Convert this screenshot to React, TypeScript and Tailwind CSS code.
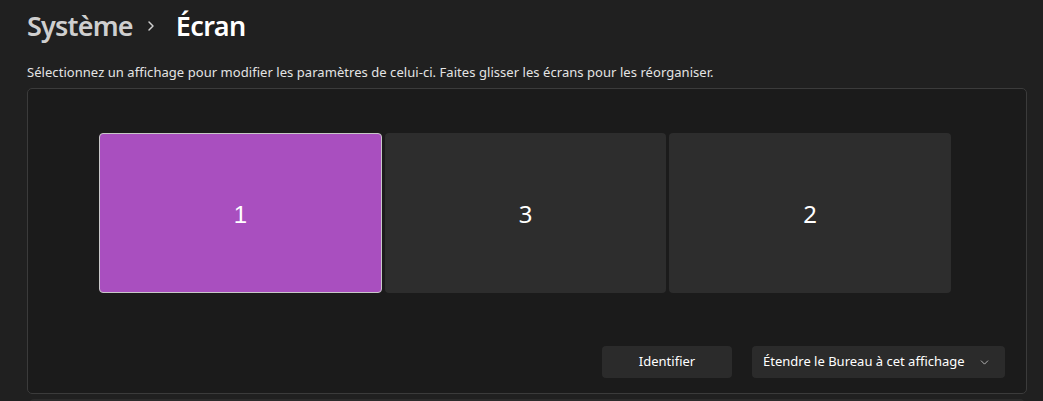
import { ChevronRight, ChevronDown } from "lucide-react";

const displays = [
  { id: "1", selected: true, w: "w-[283px]" },
  { id: "3", selected: false, w: "w-[281px]" },
  { id: "2", selected: false, w: "w-[282px]" },
];

export default function App() {
  return (
    <div className="w-[1043px] h-[401px] overflow-hidden bg-[#202020] font-['Noto_Sans',sans-serif] text-white">
      {/* breadcrumb */}
      <div className="flex items-center h-[50px] pl-[27px] pt-[2px]">
        <span className="text-[27px] font-semibold text-[#cfcfcf] tracking-[-0.8px]">Système</span>
        <ChevronRight className="ml-[10px] mr-[17px] text-[#cfcfcf]" size={16} strokeWidth={2.2} />
        <span className="text-[27px] font-semibold text-white tracking-[-0.6px]">Écran</span>
      </div>

      <p className="pl-[27px] pt-[12px] text-[13px] leading-[20px] text-[#e4e4e4] tracking-[0.05px]">
        Sélectionnez un affichage pour modifier les paramètres de celui-ci. Faites glisser les écrans pour les réorganiser.
      </p>

      {/* arrangement panel */}
      <div className="ml-[27px] mt-[6px] w-[1000px] h-[306px] rounded-[5px] border border-[#3b3b3b] bg-[#1b1b1b] flex flex-col">
        <div className="flex gap-[3px] pl-[71px] pt-[44px]">
          {displays.map((d) =>
            d.selected ? (
              <div
                key={d.id}
                className={`${d.w} h-[160px] rounded-[4px] border border-[#c8c8c8] bg-[#a94fbf] flex items-center justify-center pt-[4px] text-[24px] font-['Liberation_Sans',sans-serif]`}
              >
                {d.id}
              </div>
            ) : (
              <div
                key={d.id}
                className={`${d.w} h-[160px] rounded-[4px] bg-[#2d2d2d] flex items-center justify-center pt-[2px] text-[24px]`}
              >
                {d.id}
              </div>
            )
          )}
        </div>

        <div className="flex justify-end gap-[20px] pr-[21px] mt-[53px]">
          <button className="w-[130px] h-[32px] rounded-[4px] bg-[#2b2b2b] text-[13px] text-white">
            Identifier
          </button>
          <button className="w-[253px] h-[32px] rounded-[4px] bg-[#2b2b2b] text-[13px] text-white flex items-center pl-[11px] pr-[14px] justify-between">
            <span>Étendre le Bureau à cet affichage</span>
            <ChevronDown size={13} strokeWidth={1.5} className="text-[#cfcfcf]" />
          </button>
        </div>
      </div>

      <div className="ml-[29px] mt-[5px] w-[996px] h-[10px] rounded-t-[5px] bg-[#2b2b2b]" />
    </div>
  );
}
